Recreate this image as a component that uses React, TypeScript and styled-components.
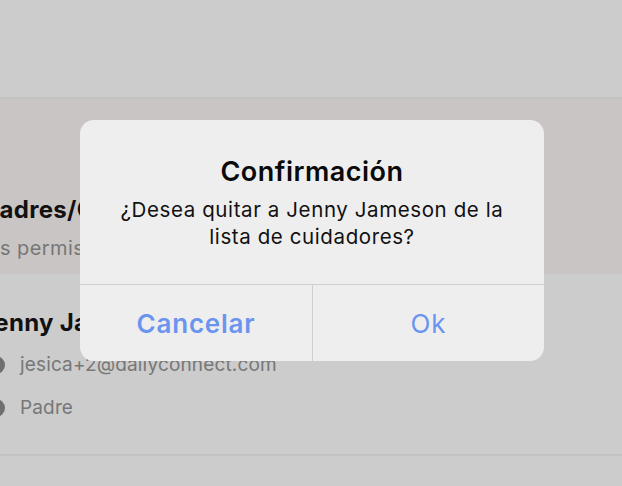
import React from "react";
import styled, { createGlobalStyle } from "styled-components";

const Global = createGlobalStyle`
  html, body { margin: 0; padding: 0; }
  body {
    width: 622px;
    height: 486px;
    overflow: hidden;
    background: #cccccc;
    font-family: Inter, "Noto Sans", "Liberation Sans", sans-serif;
    -webkit-font-smoothing: antialiased;
  }
`;

const Screen = styled.div`
  position: relative;
  width: 622px;
  height: 486px;
  overflow: hidden;
  background: #cccccc;
`;

const TopBar = styled.div`
  height: 97px;
  border-bottom: 2px solid #c3c3c3;
`;

const SectionHeader = styled.div`
  height: 175px;
  background: #c9c5c4;
  display: flex;
  flex-direction: column;
  box-sizing: border-box;
  padding-top: 96px;
`;

const Shifted = styled.div<{ $shift: number }>`
  margin-left: ${(p) => -p.$shift}px;
  white-space: nowrap;
`;

const SectionTitle = styled.div`
  font-size: 24px;
  font-weight: 700;
  color: #111;
  line-height: 30px;
  letter-spacing: 0.3px;
`;

const SectionSub = styled.div`
  font-size: 20px;
  color: #777;
  line-height: 26px;
  margin-top: 10px;
  letter-spacing: 0.4px;
`;

const Person = styled.div`
  height: 182px;
  border-bottom: 2px solid #c2c2c2;
  box-sizing: border-box;
  padding-top: 34px;
`;

const PersonName = styled.div`
  font-size: 24px;
  font-weight: 700;
  color: #111;
  line-height: 30px;
  margin-bottom: 5px;
  letter-spacing: 0.3px;
`;

const InfoRow = styled.div`
  display: flex;
  align-items: center;
  gap: 15px;
  height: 43px;
  margin-left: -13px;
`;

const Dot = styled.span`
  width: 18px;
  height: 18px;
  border-radius: 50%;
  background: #6f6f6f;
  flex: none;
`;

const InfoText = styled.span`
  font-size: 19px;
  color: #777;
  letter-spacing: 0.15px;
`;

const Dialog = styled.div`
  position: absolute;
  left: 80px;
  top: 120px;
  width: 464px;
  height: 241px;
  border-radius: 14px;
  background: #efeeee;
  display: flex;
  flex-direction: column;
  overflow: hidden;
`;

const DialogBody = styled.div`
  height: 165px;
  box-sizing: border-box;
  padding: 36px 16px 0;
  text-align: center;
  border-bottom: 1px solid #cfcfcf;
`;

const DialogTitle = styled.div`
  font-size: 27px;
  font-weight: 600;
  color: #0a0a0a;
  line-height: 32px;
  margin-bottom: 8px;
  letter-spacing: 0.5px;
`;

const DialogMessage = styled.div`
  font-size: 20.5px;
  color: #111;
  line-height: 27px;
  letter-spacing: 0.6px;
`;

const Buttons = styled.div`
  flex: 1;
  display: grid;
  grid-template-columns: 232px 1fr;
`;

const Btn = styled.div<{ $bold?: boolean }>`
  display: flex;
  align-items: center;
  justify-content: center;
  font-size: 26px;
  letter-spacing: 0.8px;
  color: #6a94ee;
  font-weight: ${(p) => (p.$bold ? 600 : 400)};
  & + & {
    border-left: 1px solid #cfcfcf;
  }
`;

export default function App() {
  return (
    <>
      <Global />
      <Screen>
        <TopBar />
        <SectionHeader>
          <Shifted $shift={16}>
            <SectionTitle>Padres/Cuidadores</SectionTitle>
          </Shifted>
          <Shifted $shift={24}>
            <SectionSub>Los permisos</SectionSub>
          </Shifted>
        </SectionHeader>
        <Person>
          <Shifted $shift={20}>
            <PersonName>Jenny Jameson</PersonName>
          </Shifted>
          <InfoRow>
            <Dot />
            <InfoText>jesica+2@dailyconnect.com</InfoText>
          </InfoRow>
          <InfoRow>
            <Dot />
            <InfoText>Padre</InfoText>
          </InfoRow>
        </Person>
        <Dialog>
          <DialogBody>
            <DialogTitle>Confirmación</DialogTitle>
            <DialogMessage>
              ¿Desea quitar a Jenny Jameson de la
              <br />
              lista de cuidadores?
            </DialogMessage>
          </DialogBody>
          <Buttons>
            <Btn $bold>Cancelar</Btn>
            <Btn>Ok</Btn>
          </Buttons>
        </Dialog>
      </Screen>
    </>
  );
}
